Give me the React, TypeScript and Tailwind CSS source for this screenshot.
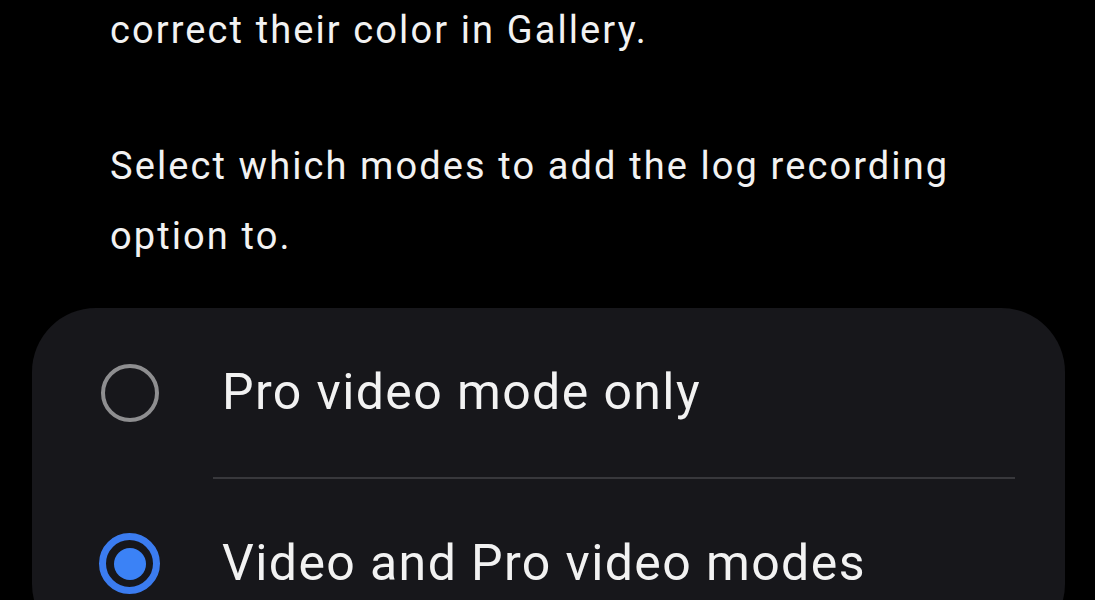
export default function App() {
    return (
        <div className="w-[1095px] h-[600px] overflow-hidden bg-black text-[#f2f2f2] font-['Roboto','Liberation_Sans',sans-serif]">
            <div className="pl-[110px] pr-[110px] -mt-[5px] text-[38px] leading-[70px] tracking-[2.1px]">
                <p>correct their color in Gallery.</p>
                <p className="mt-[66px]">Select which modes to add the log recording option to.</p>
            </div>

            <div className="ml-[32px] mt-[37px] w-[1033px] rounded-[64px] bg-[#17171b]">
                <div className="flex items-center h-[169px] pl-[69px]">
                    <span className="w-[58px] h-[58px] rounded-full border-[4px] border-[#8e8e90]"></span>
                    <span className="ml-[63px] text-[50px] tracking-[1.4px]">Pro video mode only</span>
                </div>
                <div className="ml-[181px] mr-[50px] h-[2px] bg-[#38383c]"></div>
                <div className="flex items-center h-[169px] pl-[67px]">
                    <span className="w-[61px] h-[61px] rounded-full border-[7px] border-[#3b7cf0] flex items-center justify-center">
                        <span className="w-[32px] h-[32px] rounded-full bg-[#3b82f6]"></span>
                    </span>
                    <span className="ml-[62px] text-[50px] tracking-[1.4px]">Video and Pro video modes</span>
                </div>
            </div>
        </div>
    );
}
